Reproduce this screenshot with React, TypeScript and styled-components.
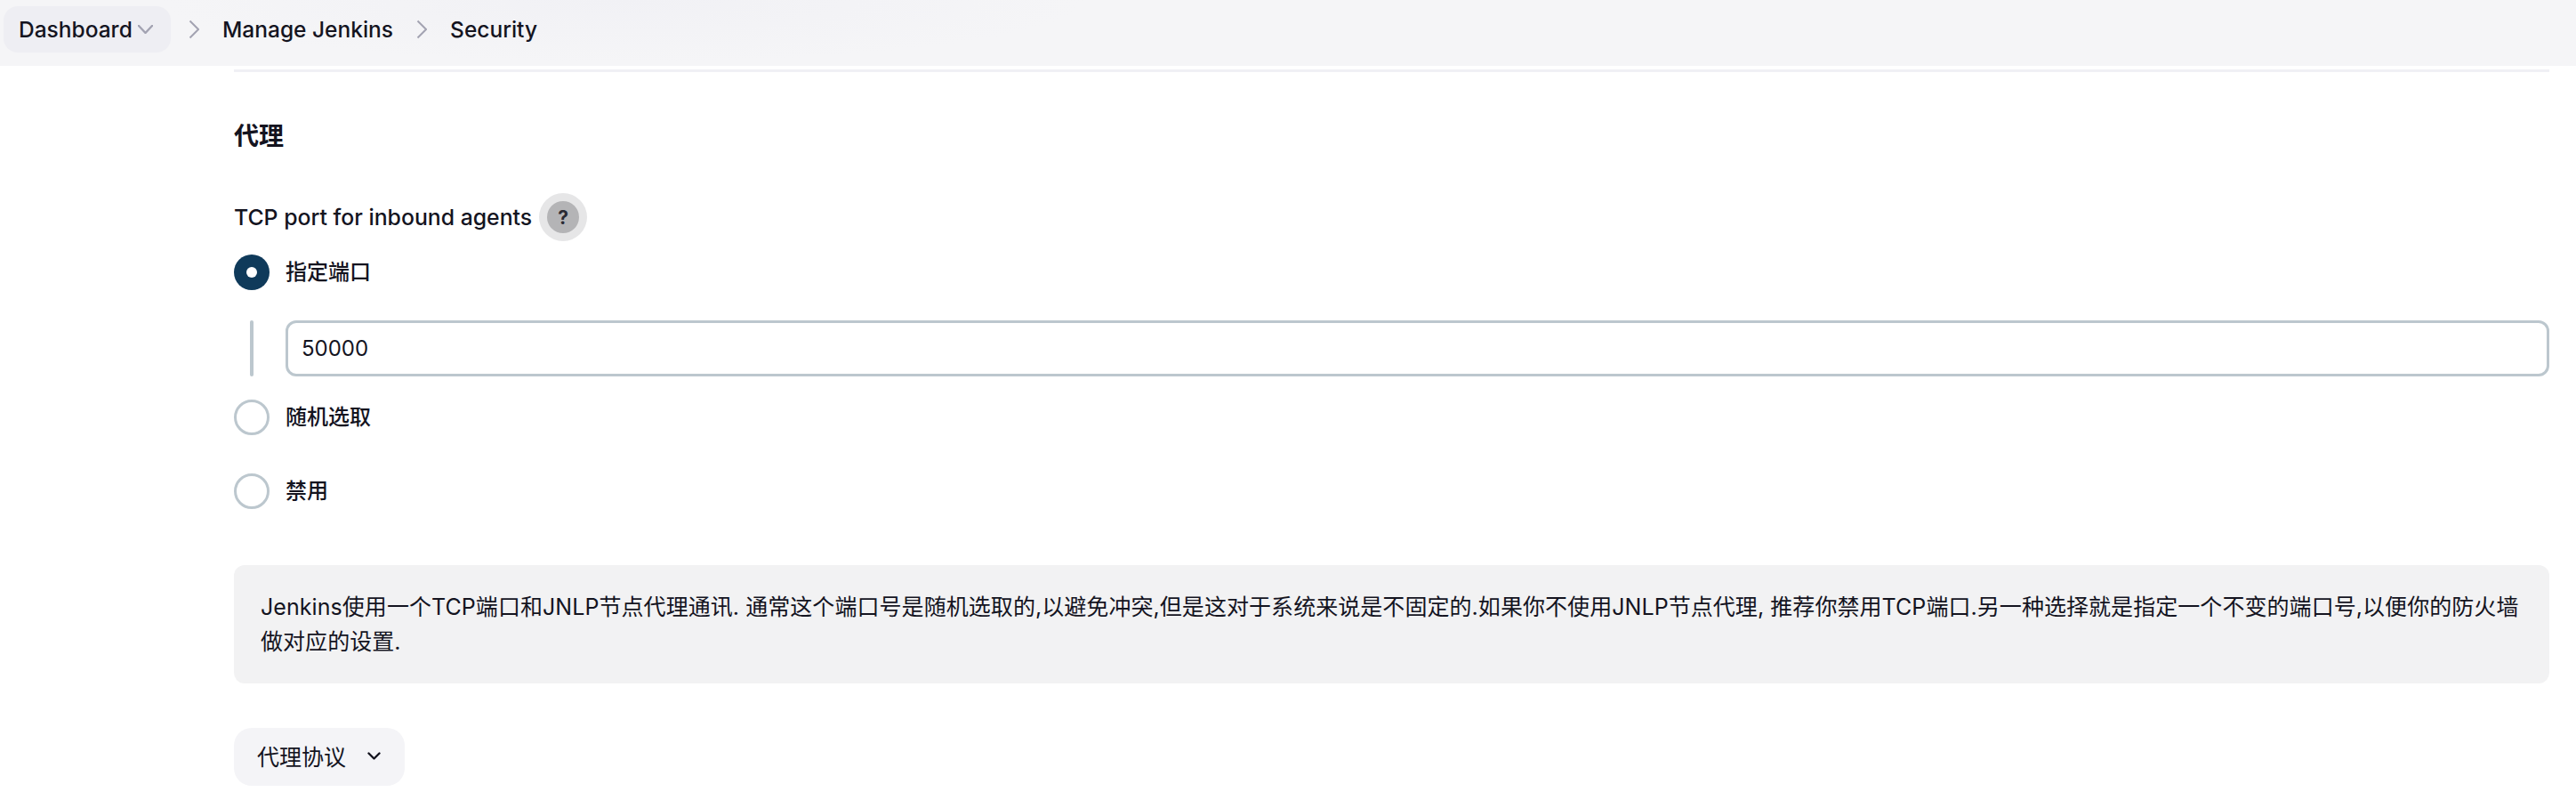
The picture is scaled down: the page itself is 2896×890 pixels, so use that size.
import React, { FC } from 'react';
import styled, { createGlobalStyle } from 'styled-components';

const GlobalStyle = createGlobalStyle`
    html, body {
        margin: 0;
        padding: 0;
        height: 100%;
        background: #fff;
        overflow: hidden;
    }
    body {
        font-family: Inter, "Noto Sans CJK SC", sans-serif;
        color: #14141f;
    }
`;

const Breadcrumbs = styled.nav`
    display: flex;
    align-items: center;
    height: 74px;
    box-sizing: border-box;
    padding: 0 0 8px 4px;
    background: radial-gradient(ellipse 520px 70px at 700px 0, #f1f1f5, #f5f5f7);
    font-size: 24.5px;
    font-weight: 500;
`;

const DropdownCrumb = styled.div`
    display: flex;
    align-items: center;
    width: 188px;
    height: 52px;
    box-sizing: border-box;
    padding-left: 17px;
    border-radius: 16px;
    background: #eeeef3;
`;

const Crumb = styled.span`
    white-space: nowrap;
`;

const Separator = styled.svg<{ $left: number }>`
    width: 12px;
    height: 22px;
    margin: 0 26px 0 ${props => props.$left}px;
    fill: none;
    stroke: #a3a3b2;
    stroke-width: 2;
`;

const Main = styled.main`
    padding: 4px 30px 0 263px;
`;

const Divider = styled.div`
    height: 3px;
    background: #f0f0f5;
`;

const Heading = styled.h2`
    margin: 55px 0 0;
    font-size: 28px;
    line-height: 34px;
    font-weight: 600;
`;

const LabelRow = styled.div`
    display: flex;
    align-items: center;
    height: 54px;
    margin-top: 47px;
    gap: 8px;
    font-size: 24.8px;
    font-weight: 500;
`;

const HelpButton = styled.span`
    display: flex;
    align-items: center;
    justify-content: center;
    width: 36px;
    height: 36px;
    border-radius: 50%;
    background: #b4b4b6;
    box-shadow: 0 0 0 9px #e6e6e7;
    margin-left: 9px;
    font-size: 21px;
    font-weight: 700;
    color: #2a2a33;
`;

const RadioRow = styled.label<{ $top: number }>`
    display: flex;
    align-items: center;
    gap: 18px;
    height: 40px;
    margin-top: ${props => props.$top}px;
    font-size: 24px;
    font-weight: 500;
`;

const RadioText = styled.span`
    padding-bottom: 6px;
`;

const RadioCircle = styled.span<{ $checked?: boolean }>`
    display: flex;
    align-items: center;
    justify-content: center;
    width: 40px;
    height: 40px;
    box-sizing: border-box;
    border-radius: 50%;
    background: ${props => props.$checked ? "#0f3a5a" : "#fff"};
    border: ${props => props.$checked ? "none" : "3.5px solid #bcc7ce"};

    &::after {
        content: "";
        display: ${props => props.$checked ? "block" : "none"};
        width: 12px;
        height: 12px;
        border-radius: 50%;
        background: #fff;
    }
`;

const NestedRow = styled.div`
    display: flex;
    margin-top: 34px;
    padding-left: 18px;
`;

const NestedBar = styled.div`
    width: 4px;
    border-radius: 2px;
    background: #bcc7ce;
    margin-right: 36px;
`;

const PortInput = styled.input`
    flex: 1;
    height: 63px;
    box-sizing: border-box;
    padding: 0 15px;
    border: 3px solid #bcc7ce;
    border-radius: 12px;
    outline: none;
    background: #fff;
    font-family: inherit;
    font-size: 24px;
    font-weight: 400;
    color: #14141f;
`;

const HelpBox = styled.div`
    height: 133px;
    box-sizing: border-box;
    margin-top: 63px;
    padding: 28px 30px 0;
    border-radius: 12px;
    background: #f2f2f3;
    font-size: 25px;
    letter-spacing: 0.06px;
    line-height: 39px;
`;

const AdvancedButton = styled.button`
    display: flex;
    align-items: center;
    height: 65px;
    margin-top: 50px;
    padding: 0 27px 3px 26px;
    gap: 24px;
    border: none;
    border-radius: 20px;
    background: #f4f4f7;
    font-family: inherit;
    font-size: 25px;
    font-weight: 400;
    color: #14141f;
`;

const Chevron = styled.svg<{ $w: number; $color: string }>`
    width: ${props => props.$w}px;
    fill: none;
    stroke: ${props => props.$color};
    stroke-width: 2.4;
    stroke-linecap: round;
    stroke-linejoin: round;
`;

const CrumbChevron = styled(Chevron)`
    margin-left: 6px;
`;

const options = [
    { label: "指定端口", checked: true, top: 15 },
    { label: "随机选取", top: 26 },
    { label: "禁用", top: 43 },
];

const Radio: FC<{ label: string; checked?: boolean; top: number }> = ({ label, checked, top }) => (
    <RadioRow $top={top}>
        <RadioCircle $checked={checked} />
        <RadioText>{label}</RadioText>
    </RadioRow>
);

const App: FC = () => (
    <>
        <GlobalStyle />
        <Breadcrumbs>
            <DropdownCrumb>
                <Crumb>Dashboard</Crumb>
                <CrumbChevron $w={17} $color="#a3a3b2" viewBox="0 0 17 10" height="10">
                    <path d="M1 1l7.500 8L16 1" />
                </CrumbChevron>
            </DropdownCrumb>
            <Separator $left={20} viewBox="0 0 12 22"><path d="M1.500 1.500L11 11 1.500 20.500" /></Separator>
            <Crumb>Manage Jenkins</Crumb>
            <Separator $left={26} viewBox="0 0 12 22"><path d="M1.500 1.500L11 11 1.500 20.500" /></Separator>
            <Crumb>Security</Crumb>
        </Breadcrumbs>
        <Main>
            <Divider />
            <Heading>代理</Heading>
            <LabelRow>
                TCP port for inbound agents
                <HelpButton>?</HelpButton>
            </LabelRow>
            <Radio {...options[0]} />
            <NestedRow>
                <NestedBar />
                <PortInput defaultValue="50000" />
            </NestedRow>
            <Radio {...options[1]} />
            <Radio {...options[2]} />
            <HelpBox>
                Jenkins使用一个TCP端口和JNLP节点代理通讯. 通常这个端口号是随机选取的,以避免冲突,但是这对于系统来说是不固定的.如果你不使用JNLP节点代理, 推荐你禁用TCP端口.另一种选择就是指定一个不变的端口号,以便你的防火墙做对应的设置.
            </HelpBox>
            <AdvancedButton>
                代理协议
                <Chevron $w={15} $color="#14141f" viewBox="0 0 15 9" height="9">
                    <path d="M1.500 1.500L7.500 7.500l6-6" />
                </Chevron>
            </AdvancedButton>
        </Main>
    </>
);

export default App;
